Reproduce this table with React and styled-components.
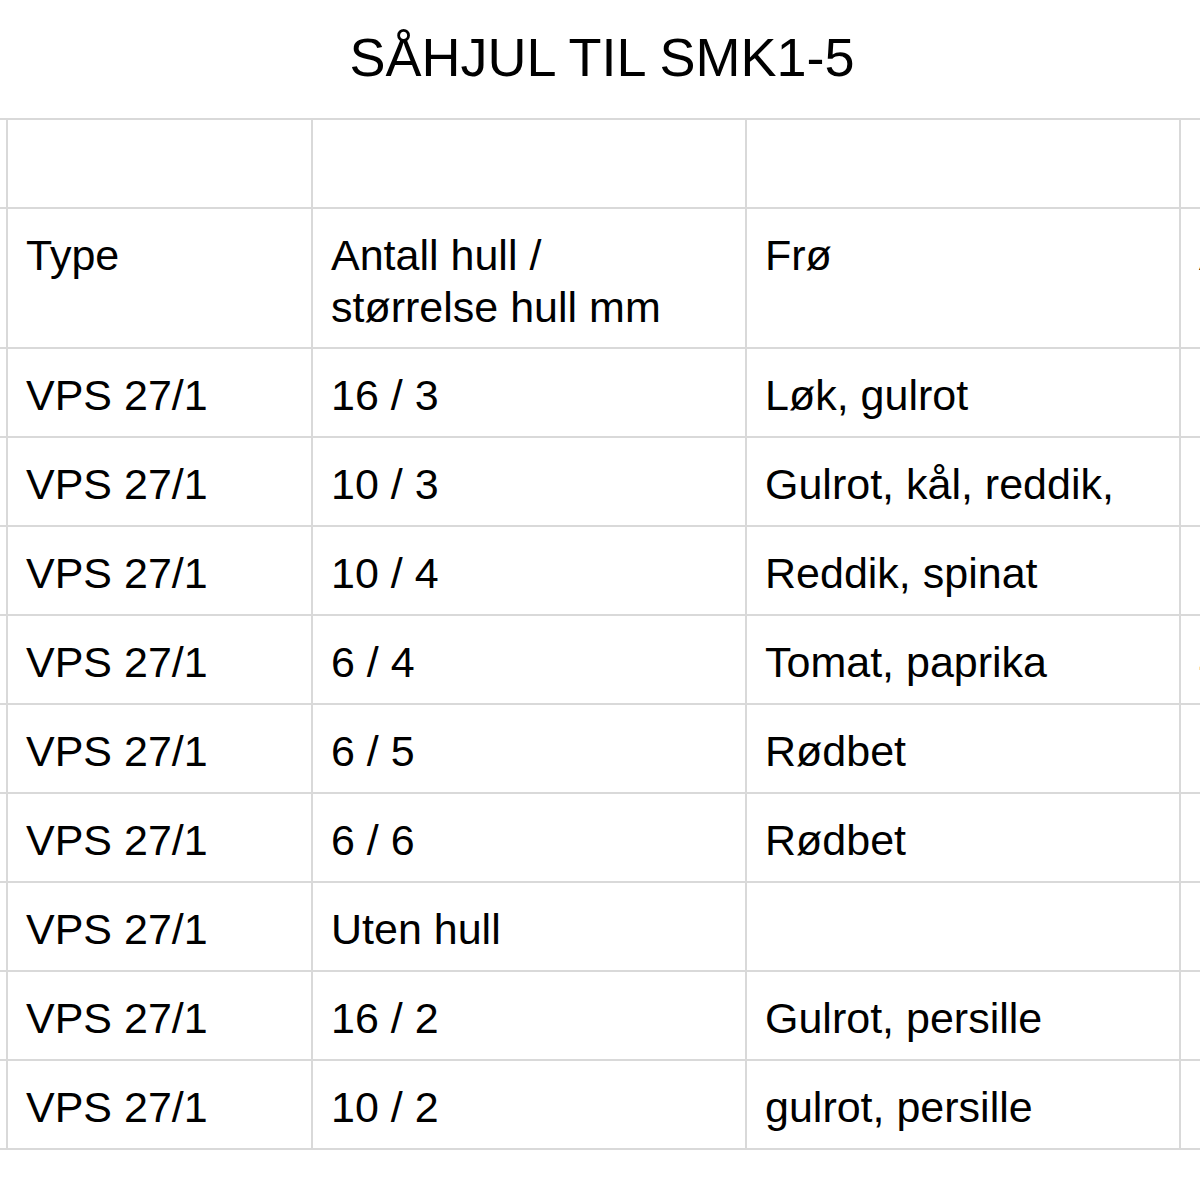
import React from 'react';
import styled, { createGlobalStyle } from 'styled-components';

const rows = [
  { type: 'VPS 27/1', holes: '16 / 3', seeds: 'Løk, gulrot', extra: '3' },
  { type: 'VPS 27/1', holes: '10 / 3', seeds: 'Gulrot, kål, reddik,', extra: '3' },
  { type: 'VPS 27/1', holes: '10 / 4', seeds: 'Reddik, spinat', extra: '3' },
  { type: 'VPS 27/1', holes: '6 / 4', seeds: 'Tomat, paprika', extra: '4' },
  { type: 'VPS 27/1', holes: '6 / 5', seeds: 'Rødbet', extra: '6' },
  { type: 'VPS 27/1', holes: '6 / 6', seeds: 'Rødbet', extra: '6' },
  { type: 'VPS 27/1', holes: 'Uten hull', seeds: '', extra: '' },
  { type: 'VPS 27/1', holes: '16 / 2', seeds: 'Gulrot, persille', extra: '3' },
  { type: 'VPS 27/1', holes: '10 / 2', seeds: 'gulrot, persille', extra: '3' },
];

function App() {
  return (
    <>
      <GlobalStyle />
      <Page>
        <Title>SÅHJUL TIL SMK1-5</Title>
        <Sheet>
          <Cell $edge />
          <Cell />
          <Cell />
          <Cell />
          <Cell />

          <Cell $edge />
          <Cell>Type</Cell>
          <Cell>
            Antall hull /<br />
            størrelse hull mm
          </Cell>
          <Cell>Frø</Cell>
          <Cell>Avstand cm</Cell>

          {rows.map((row, i) => (
            <React.Fragment key={i}>
              <Cell $edge />
              <Cell>{row.type}</Cell>
              <Cell>{row.holes}</Cell>
              <Cell>{row.seeds}</Cell>
              <Cell>{row.extra}</Cell>
            </React.Fragment>
          ))}
        </Sheet>
      </Page>
    </>
  );
}

const GlobalStyle = createGlobalStyle`
  html, body {
    margin: 0;
    padding: 0;
    background: #ffffff;
  }
  body {
    font-family: "Liberation Sans", Arial, Helvetica, sans-serif;
    color: #000000;
  }
`;

const Page = styled.div`
  width: 1200px;
  height: 1200px;
  overflow: hidden;
  background: #ffffff;
`;

const Title = styled.h1`
  margin: 0;
  box-sizing: border-box;
  height: 118px;
  padding-top: 30px;
  padding-left: 4px;
  text-align: center;
  font-size: 54px;
  line-height: 54px;
  font-weight: 400;
  white-space: nowrap;
`;

const Sheet = styled.div`
  display: grid;
  grid-template-columns: 6px 303px 432px 432px 300px;
  grid-template-rows: 87px 138px;
  grid-auto-rows: 87px;
  gap: 2px;
  padding: 2px 0;
  width: max-content;
  background: #d9d9d9;
`;

const Cell = styled.div`
  box-sizing: border-box;
  background: #ffffff;
  padding: ${({ $edge }) => ($edge ? '0' : '20px 10px 0 18px')};
  font-size: 43px;
  line-height: 52px;
  white-space: nowrap;
  overflow: hidden;
`;

export default App;
